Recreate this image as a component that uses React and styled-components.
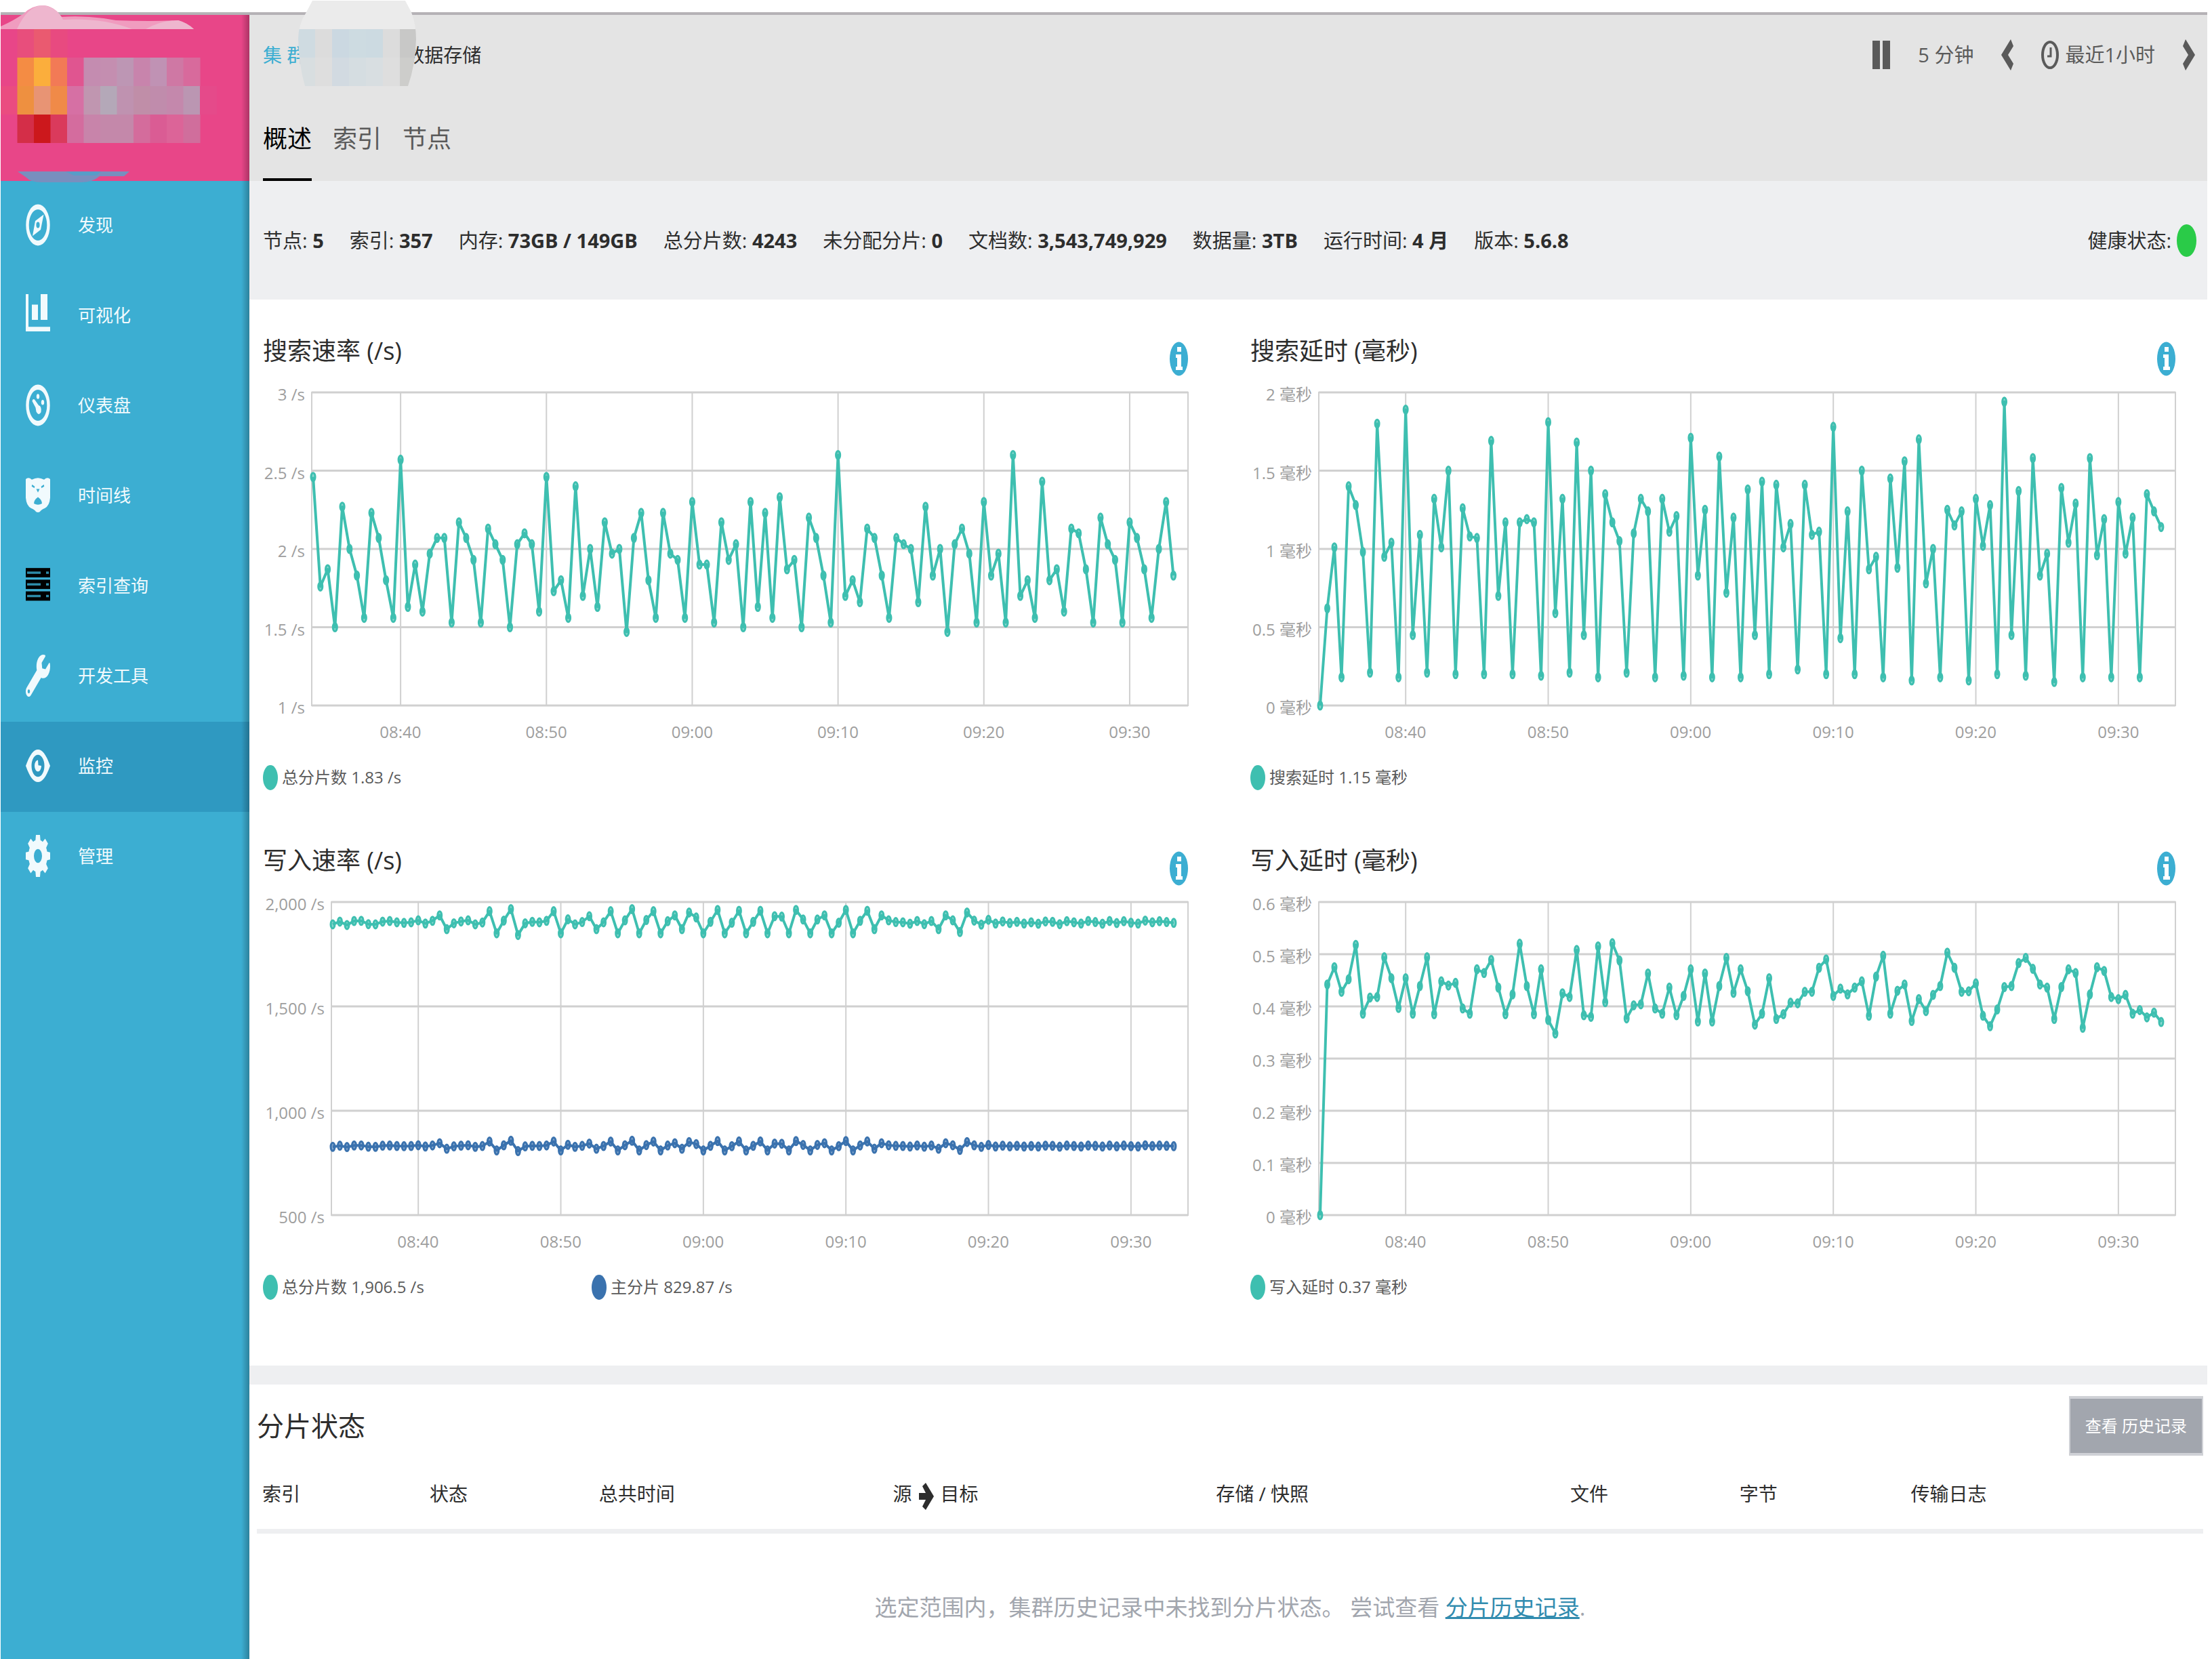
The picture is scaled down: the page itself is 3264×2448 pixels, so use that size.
import styled, { createGlobalStyle } from 'styled-components'
import { FaWrench } from 'react-icons/fa'

const GlobalStyle = createGlobalStyle`
* {
box-sizing: border-box;
}
body {
margin: 0;
background: #FFFFFF;
color: #2D2D2D;
font-family: "Open Sans", "Noto Sans CJK SC", sans-serif;
font-size: 28px;
line-height: 40px;
}
a {
color: inherit;
text-decoration: none;
}
button {
border: 0;
padding: 0;
background: none;
color: inherit;
font: inherit;
cursor: pointer;
}
svg {
display: block;
flex: none;
overflow: visible;
}
`
const Page = styled.div`
padding: 18px 7px 0 1px;
`
const Shell = styled.div`
display: flex;
min-height: calc(100vh - 18px);
border-top: 4px solid #B5B2B6;
`
const Sidebar = styled.aside`
position: relative;
flex: none;
width: 367px;
background: #3CAED2;
&::after {
content: '';
position: absolute;
top: 0;
right: 0;
bottom: 0;
width: 12px;
background: linear-gradient(to right, rgba(0, 0, 0, 0), rgba(0, 0, 0, 0.26));
}
`
const LogoBox = styled.div`
height: 245px;
background: #E84688;
`
const NavLink = styled.a`
display: flex;
align-items: center;
gap: 41px;
height: 133px;
padding: 0 0 4px 37px;
font-size: 26px;
color: #F1FAFD;
background: ${props => props.$active ? '#2F99C1' : 'none'};
svg {
width: 36px;
height: 62px;
}
`
const Main = styled.main`
flex: 1;
min-width: 0;
`
const TopBar = styled.header`
position: relative;
display: flex;
justify-content: space-between;
align-items: flex-start;
padding: 39px 18px 0 20px;
background: #E4E4E4;
`
const Crumbs = styled.div`
display: flex;
gap: 147px;
margin-bottom: 74px;
white-space: nowrap;
`
const CrumbLink = styled.a`
color: #3CAED2;
`
const CrumbMask = styled.svg`
position: absolute;
top: -22px;
left: 72px;
`
const Tabs = styled.nav`
display: flex;
gap: 31px;
`
const Tab = styled.a`
padding-bottom: 28px;
border-bottom: 4px solid ${props => props.$active ? '#000000' : 'transparent'};
font-size: 36px;
line-height: 60px;
color: ${props => props.$active ? '#000000' : '#5A5A5A'};
`
const Controls = styled.div`
display: flex;
align-items: center;
gap: 41px;
height: 40px;
font-size: 29px;
color: #5A5A5A;
`
const ControlButton = styled.button`
display: flex;
align-items: center;
gap: 9px;
`
const StatusBar = styled.section`
display: flex;
align-items: center;
gap: 38px;
height: 175px;
padding: 0 16px 0 20px;
background: #EEEFF1;
font-size: 29px;
white-space: nowrap;
`
const Health = styled.div`
display: flex;
align-items: center;
gap: 8px;
margin-left: auto;
`
const HealthDot = styled.span`
width: 29px;
height: 48px;
border-radius: 50%;
background: #2ACB48;
`
const ChartGrid = styled.section`
display: grid;
grid-template-columns: repeat(2, minmax(0, 1fr));
column-gap: 92px;
padding: 0 47px 69px 20px;
`
const Panel = styled.article`
padding: 44px 0 27px;
`
const PanelHeader = styled.div`
display: flex;
justify-content: space-between;
height: 69px;
margin-bottom: 24px;
`
const PanelTitle = styled.h2`
margin: 0;
font-size: 36px;
font-weight: 400;
line-height: 64px;
`
const InfoButton = styled.button`
align-self: flex-end;
`
const ChartBody = styled.div`
display: grid;
grid-template-columns: ${props => props.$axis}px minmax(0, 1fr);
font-size: 24px;
line-height: 32px;
color: #9E9E9E;
`
const YAxis = styled.div`
display: flex;
flex-direction: column;
justify-content: space-between;
height: 494px;
margin: -13px 0 -19px;
padding-right: 10px;
text-align: right;
white-space: nowrap;
`
const Plot = styled.svg`
width: 100%;
height: 462px;
`
// the first tick sits twelve samples in, later ones every twenty
const XAxis = styled.div`
grid-column: 2;
display: flex;
margin-top: 23px;
padding-left: 1.8%;
`
const XTick = styled.span`
flex: 0 0 calc(100% / 5.9);
text-align: center;
`
const Legend = styled.div`
display: flex;
margin-top: 31px;
font-size: 24px;
color: #5A5A5A;
`
const LegendItem = styled.div`
display: flex;
align-items: center;
gap: 6px;
width: ${props => props.$wide ? '485px' : 'auto'};
`
const LegendDot = styled.span`
width: 22px;
height: 37px;
border-radius: 50%;
background: ${props => props.color};
`
const Divider = styled.div`
height: 28px;
background: #EEEFF1;
`
const ShardSection = styled.section`
padding: 17px 6px 0 11px;
`
const ShardHeader = styled.div`
display: flex;
align-items: center;
justify-content: space-between;
`
const ShardTitle = styled.h2`
margin: 0;
font-size: 40px;
font-weight: 400;
`
const HistoryButton = styled.button`
height: 88px;
padding: 0 22px;
border: solid #CFD1D6;
border-width: 4px 2px;
background: #A2A6AE;
font-size: 24px;
color: #FFFFFF;
`
const Table = styled.table`
width: 100%;
border-collapse: collapse;
table-layout: fixed;
`
const HeadCell = styled.th`
width: ${props => props.width};
padding: 36px 8px 32px;
border-bottom: 7px solid #EEEFF1;
font-weight: 400;
text-align: left;
svg {
display: inline-block;
margin: -8px 10px;
vertical-align: middle;
}
`
const EmptyCell = styled.td`
padding: 85px 0 40px;
font-size: 33px;
line-height: 48px;
text-align: center;
color: #A2A6AE;
`
const EmptyLink = styled.a`
color: #328CAF;
text-decoration: underline;
text-decoration-thickness: 3px;
`

const TEAL = '#3EBFB0'
const BLUE = '#3A72AE'

const searchRate = [
    2.46, 1.76, 1.87, 1.5, 2.27, 2, 1.83, 1.56, 2.23, 2.07, 1.8, 1.56,
    2.57, 1.63, 1.9, 1.6, 1.97, 2.07, 2.07, 1.53, 2.17, 2.07, 1.93, 1.53, 2.13, 2.03, 1.93, 1.5, 2.03, 2.1, 2.03, 1.6,
    2.46, 1.73, 1.8, 1.56, 2.4, 1.7, 2, 1.63, 2.17, 1.97, 2, 1.47, 2.07, 2.23, 1.8, 1.56, 2.23, 1.97, 1.93, 1.56,
    2.3, 1.9, 1.9, 1.53, 2.17, 1.93, 2.03, 1.5, 2.3, 1.63, 2.23, 1.56, 2.33, 1.87, 1.93, 1.5, 2.2, 2.07, 1.83, 1.53,
    2.6, 1.7, 1.8, 1.66, 2.13, 2.07, 1.83, 1.56, 2.07, 2.03, 2, 1.66, 2.27, 1.83, 2, 1.47, 2.03, 2.13, 1.97, 1.53,
    2.3, 1.83, 1.97, 1.53, 2.6, 1.7, 1.8, 1.56, 2.43, 1.8, 1.87, 1.6, 2.13, 2.1, 1.87, 1.53, 2.2, 2.03, 1.93, 1.53,
    2.17, 2.07, 1.87, 1.56, 2, 2.3, 1.83,
]

const searchLatency = [
    0, 0.62, 1.01, 0.18, 1.4, 1.28, 0.98, 0.21, 1.8, 0.95, 1.04, 0.18,
    1.89, 0.45, 1.09, 0.21, 1.32, 1.01, 1.5, 0.2, 1.26, 1.08, 1.07, 0.2, 1.69, 0.7, 1.17, 0.2, 1.17, 1.19, 1.17, 0.19,
    1.81, 0.59, 1.32, 0.21, 1.68, 0.45, 1.5, 0.18, 1.35, 1.17, 1.05, 0.21, 1.1, 1.32, 1.24, 0.18, 1.32, 1.11, 1.21, 0.19,
    1.71, 0.83, 1.25, 0.18, 1.59, 0.72, 1.2, 0.18, 1.38, 0.45, 1.43, 0.2, 1.41, 1.01, 1.16, 0.23, 1.41, 1.09, 1.11, 0.2,
    1.78, 0.43, 1.24, 0.2, 1.5, 0.87, 0.95, 0.18, 1.45, 0.88, 1.56, 0.16, 1.7, 0.78, 1, 0.18, 1.25, 1.15, 1.24, 0.16,
    1.32, 1.02, 1.28, 0.2, 1.94, 0.45, 1.37, 0.19, 1.58, 0.83, 0.97, 0.15, 1.39, 1.04, 1.29, 0.18, 1.58, 0.96, 1.19, 0.18,
    1.3, 0.97, 1.2, 0.18, 1.35, 1.24, 1.14,
]

const indexRate = [
    1893, 1906, 1890, 1909, 1910, 1894, 1893, 1906, 1909, 1903, 1900, 1903,
    1912, 1897, 1910, 1936, 1870, 1898, 1907, 1912, 1893, 1902, 1956, 1850, 1911, 1966, 1842, 1898, 1905, 1903, 1910, 1956,
    1850, 1917, 1893, 1904, 1932, 1870, 1903, 1956, 1850, 1912, 1966, 1850, 1914, 1956, 1850, 1908, 1936, 1870, 1950, 1926,
    1850, 1905, 1962, 1850, 1901, 1958, 1850, 1905, 1958, 1850, 1932, 1930, 1850, 1962, 1916, 1850, 1916, 1936, 1850, 1901,
    1962, 1850, 1910, 1958, 1870, 1936, 1912, 1904, 1903, 1896, 1909, 1894, 1909, 1870, 1936, 1912, 1856, 1950, 1911, 1892,
    1915, 1897, 1907, 1899, 1905, 1897, 1903, 1896, 1907, 1905, 1894, 1908, 1903, 1897, 1909, 1904, 1896, 1909, 1899, 1908,
    1901, 1897, 1911, 1903, 1908, 1904, 1900,
]

// primaries take a bit under half of the total load
const primaryRate = indexRate.map(value => 832 + (value - 1905) * 0.4)

const indexLatency = [
    0, 0.442, 0.475, 0.428, 0.452, 0.518, 0.386, 0.417, 0.418, 0.494, 0.454, 0.397,
    0.454, 0.386, 0.439, 0.494, 0.385, 0.448, 0.44, 0.445, 0.396, 0.386, 0.471, 0.464, 0.489, 0.436, 0.385, 0.423, 0.52, 0.439, 0.385, 0.471,
    0.374, 0.348, 0.425, 0.418, 0.508, 0.383, 0.38, 0.515, 0.408, 0.521, 0.488, 0.377, 0.402, 0.404, 0.463, 0.396, 0.386, 0.436, 0.383, 0.42,
    0.471, 0.371, 0.463, 0.371, 0.439, 0.493, 0.426, 0.471, 0.429, 0.365, 0.386, 0.454, 0.376, 0.385, 0.407, 0.406, 0.428, 0.428, 0.474, 0.49,
    0.42, 0.434, 0.423, 0.436, 0.448, 0.382, 0.457, 0.497, 0.386, 0.43, 0.442, 0.372, 0.414, 0.391, 0.422, 0.439, 0.503, 0.474, 0.428, 0.429,
    0.444, 0.382, 0.362, 0.394, 0.437, 0.439, 0.483, 0.493, 0.472, 0.442, 0.436, 0.376, 0.437, 0.471, 0.464, 0.359, 0.423, 0.475, 0.468, 0.418,
    0.414, 0.422, 0.386, 0.393, 0.379, 0.388, 0.37,
]

const charts = [
    {
        title: '搜索速率 (/s)',
        axis: 72,
        min: 1,
        max: 3,
        labels: ['3 /s', '2.5 /s', '2 /s', '1.5 /s', '1 /s'],
        series: [{ name: '总分片数', value: '1.83 /s', color: TEAL, points: searchRate }],
    },
    {
        title: '搜索延时 (毫秒)',
        axis: 101,
        min: 0,
        max: 2,
        labels: ['2 毫秒', '1.5 毫秒', '1 毫秒', '0.5 毫秒', '0 毫秒'],
        series: [{ name: '搜索延时', value: '1.15 毫秒', color: TEAL, points: searchLatency }],
    },
    {
        title: '写入速率 (/s)',
        axis: 101,
        min: 500,
        max: 2000,
        labels: ['2,000 /s', '1,500 /s', '1,000 /s', '500 /s'],
        series: [
            { name: '总分片数', value: '1,906.5 /s', color: TEAL, points: indexRate },
            { name: '主分片', value: '829.87 /s', color: BLUE, points: primaryRate },
        ],
    },
    {
        title: '写入延时 (毫秒)',
        axis: 101,
        min: 0,
        max: 0.6,
        labels: ['0.6 毫秒', '0.5 毫秒', '0.4 毫秒', '0.3 毫秒', '0.2 毫秒', '0.1 毫秒', '0 毫秒'],
        series: [{ name: '写入延时', value: '0.37 毫秒', color: TEAL, points: indexLatency }],
    },
]

const times = ['08:40', '08:50', '09:00', '09:10', '09:20', '09:30']

const stats = [
    ['节点', '5'],
    ['索引', '357'],
    ['内存', '73GB / 149GB'],
    ['总分片数', '4243'],
    ['未分配分片', '0'],
    ['文档数', '3,543,749,929'],
    ['数据量', '3TB'],
    ['运行时间', '4 月'],
    ['版本', '5.6.8'],
]

const PLOT_WIDTH = 1280
const PLOT_HEIGHT = 462
const sampleX = index => 2 + index * 10.65

function Icon({ children }) {
    return (
        <svg viewBox="0 0 36 36" preserveAspectRatio="none" fill="currentColor" aria-hidden="true">
            {children}
        </svg>
    )
}

const DiscoverIcon = () => (
    <Icon>
        <circle cx="18" cy="18" r="15.5" fill="none" stroke="currentColor" strokeWidth="4.4" />
        <path fillRule="evenodd" d="M26.5 9L22 22L10 27.5L14 14.5ZM18 15.4A2.6 2.6 0 1 0 18 20.6A2.6 2.6 0 1 0 18 15.4Z" />
    </Icon>
)

const VisualizeIcon = () => (
    <Icon>
        <path d="M0 0H4V28H36V32H0Z" />
        <path d="M9 9H18V22H9ZM22 0H32V22H22Z" />
    </Icon>
)

const DashboardIcon = () => (
    <Icon>
        <circle cx="18" cy="18" r="15.5" fill="none" stroke="currentColor" strokeWidth="4.4" />
        <path d="M9.5 14.5Q10 12 13 13L19 18Q24 19 22.5 24Q19 27.5 15.5 23.5L14.5 20Z" />
        <circle cx="18" cy="10.5" r="2.2" />
        <circle cx="25" cy="15.5" r="2.2" />
    </Icon>
)

const TimelionIcon = () => (
    <Icon>
        <path d="M0 4Q4 2 9 4.5Q18 1.5 27 4.5Q32 2 36 4V20Q35 27 28 29Q23 30 21 32Q18 33 15 32Q13 30 8 29Q1 27 0 20Z" />
        <path d="M9 9.500L13 11M27 9.500L23 11" stroke="#3CAED2" strokeWidth="1.600" />
        <path d="M15.500 12.500H20.500L18 15.500Z" fill="#3CAED2" />
        <path d="M12 25Q12 22 18 19.500Q24 22 24 25Q18 27 12 25Z" fill="#3CAED2" />
    </Icon>
)

const QueryIcon = () => (
    <Icon>
        {[3, 13, 23].map(y => (
            <g key={y}>
                <rect x="0" y={y} width="36" height="8" fill="#000000" />
                <rect x="2" y={y + 3} width="20" height="2" fill="#2D8BA8" />
                <rect x="30" y={y + 3} width="4" height="2" fill="#2D8BA8" />
            </g>
        ))}
    </Icon>
)

const MonitorIcon = () => (
    <Icon>
        <path d="M0 18C6 8 12 4 18 4S30 8 36 18C30 28 24 32 18 32S6 28 0 18Z" />
        <circle cx="18" cy="18" r="9.5" fill="#2F99C1" />
        <path d="M18 13A5 5 0 1 0 23 18L18.5 17.5Z" />
    </Icon>
)

const GearIcon = () => (
    <Icon>
        <circle cx="18" cy="18" r="10" fill="none" stroke="currentColor" strokeWidth="8" />
        {[0, 45, 90, 135].map(angle => (
            <g key={angle} transform={`rotate(${angle} 18 18)`}>
                <path d="M15 0H21L22 7H14ZM15 36H21L22 29H14Z" />
            </g>
        ))}
    </Icon>
)

const WrenchIcon = () => <FaWrench preserveAspectRatio="none" aria-hidden="true" />

const navItems = [
    ['发现', DiscoverIcon],
    ['可视化', VisualizeIcon],
    ['仪表盘', DashboardIcon],
    ['时间线', TimelionIcon],
    ['索引查询', QueryIcon],
    ['开发工具', WrenchIcon],
    ['监控', MonitorIcon],
    ['管理', GearIcon],
]

const logoRows = [
    [null, '#E84E7C', '#EA5A70', '#E84A80'],
    [null, '#F48C44', '#FBAE3C', '#F27A56', '#E05590', '#C48CB0', '#C48EB0', '#BD96B4', '#C884AC', '#C092B4', '#CF78A4', '#D86A9C'],
    ['#EA4C80', '#EE9040', '#E89474', '#F08A48', '#D670A4', '#C096B0', '#B4A8B8', '#BF92B0', '#C08EA8', '#C08CAC', '#C488AC', '#BB96B2', '#E54A8A'],
    [null, '#D42E48', '#CC181C', '#DA3A5C', '#D46C9E', '#C884AA', '#C488AA', '#C488AA', '#D46C9C', '#DA5C94', '#DC6498', '#D06E9C'],
]

function Logo() {
    return (
        <svg width="367" height="245" aria-hidden="true">
            <path d="M0 21V17Q20 8 34 -2Q46 -14 62 -14Q78 -14 90 3Q120 1 152 5L170 8Q220 10 262 8Q276 12 285 21Z" fill="#F09CBF" />
            <path d="M24 21Q40 -14 62 -14Q82 -12 92 7Q150 4 194 21ZM214 21Q236 8 262 8Q276 12 285 21Z" fill="#EEB6CE" />
            {logoRows.map((row, y) => row.map((color, x) => color && (
                <rect key={`${x}-${y}`} x={x * 24.5} y={21 + y * 42} width="25" height="42" fill={color} />
            )))}
            <path d="M25 231H190L182 238H146Q136 247 118 247H60Q44 247 38 240Z" fill="#788FBE" />
            <path d="M96 231H148L142 237H108Z" fill="#589CC8" />
        </svg>
    )
}

function CrumbBlur() {
    const upper = ['#CFDBE1', '#DCDCDC', '#CBD8E1', '#CDDBE1', '#CCDAE1', '#DCDCDC', '#C8C8C7']
    const lower = ['#D8DEE0', '#DEDEDE', '#D2DAE1', '#D5DDE1', '#D8DEE1', '#DEDEDE', '#CDCDCB']
    return (
        <CrumbMask width="174" height="128" aria-hidden="true">
            <defs>
                <clipPath id="crumb-blur">
                    <path d="M21 1H158L167 18Q174 36 174 58Q173 96 162 127H10Q1 96 0 58Q0 36 12 18Z" />
                </clipPath>
            </defs>
            <g clipPath="url(#crumb-blur)">
                <rect width="174" height="43" fill="#EBEBEB" />
                {upper.map((color, x) => <rect key={x} x={x * 25} y="43" width="25" height="42" fill={color} />)}
                {lower.map((color, x) => <rect key={x} x={x * 25} y="85" width="25" height="42" fill={color} />)}
            </g>
        </CrumbMask>
    )
}

function Chevron({ right }) {
    return (
        <svg width="18" height="46" viewBox="0 0 18 46" aria-hidden="true">
            <path
                d={right ? 'M4 0L18 23L4 46L0 36L8 23L0 10Z' : 'M14 0L0 23L14 46L18 36L10 23L18 10Z'}
                fill="currentColor"
            />
        </svg>
    )
}

function Series({ points, color, min, max }) {
    const coords = points.map((value, index) => [
        sampleX(index),
        PLOT_HEIGHT - (value - min) / (max - min) * PLOT_HEIGHT,
    ])
    return (
        <g stroke={color}>
            <polyline points={coords.map(point => point.join(',')).join(' ')} fill="none" strokeWidth="4" strokeLinejoin="round" />
            {coords.map(([x, y]) => (
                <ellipse key={x} cx={x} cy={y} rx="3" ry="6" fill={color} fillOpacity="0.6" strokeWidth="3" />
            ))}
        </g>
    )
}

function Chart({ title, axis, min, max, labels, series }) {
    return (
        <Panel>
            <PanelHeader>
                <PanelTitle>{title}</PanelTitle>
                <InfoButton aria-label={title}>
                    <svg width="27" height="51" viewBox="0 0 27 51" aria-hidden="true">
                        <ellipse cx="13.5" cy="25.5" rx="13.5" ry="25" fill="#3CAED2" />
                        <path d="M11 8H17V15H11ZM9 19H17V37H19V42H9V37H11V24H9Z" fill="#FFFFFF" />
                    </svg>
                </InfoButton>
            </PanelHeader>
            <ChartBody $axis={axis}>
                <YAxis>
                    {labels.map(label => <span key={label}>{label}</span>)}
                </YAxis>
                <Plot viewBox={`0 0 ${PLOT_WIDTH} ${PLOT_HEIGHT}`} preserveAspectRatio="none">
                    <g stroke="#D0D0D0">
                        {labels.map((label, index) => {
                            const y = index * PLOT_HEIGHT / (labels.length - 1)
                            return <line key={label} x1="0" x2={PLOT_WIDTH} y1={y} y2={y} strokeWidth="3" />
                        })}
                        {times.map((time, index) => {
                            const x = sampleX(12 + index * 20)
                            return <line key={time} x1={x} x2={x} y1="0" y2={PLOT_HEIGHT} strokeWidth="2" />
                        })}
                        <rect width={PLOT_WIDTH} height={PLOT_HEIGHT} fill="none" strokeWidth="2" />
                    </g>
                    {series.map(item => (
                        <Series key={item.name} points={item.points} color={item.color} min={min} max={max} />
                    ))}
                </Plot>
                <XAxis>
                    {times.map(time => <XTick key={time}>{time}</XTick>)}
                </XAxis>
            </ChartBody>
            <Legend>
                {series.map(item => (
                    <LegendItem key={item.name} $wide={series.length > 1}>
                        <LegendDot color={item.color} />
                        <span>{item.name} {item.value}</span>
                    </LegendItem>
                ))}
            </Legend>
        </Panel>
    )
}

export default function App() {
    return (
        <Page>
            <GlobalStyle />
            <Shell>
                <Sidebar>
                    <LogoBox>
                        <Logo />
                    </LogoBox>
                    <nav>
                        {navItems.map(([label, NavIcon]) => (
                            <NavLink key={label} href="#" $active={label === '监控'}>
                                <NavIcon />
                                {label}
                            </NavLink>
                        ))}
                    </nav>
                </Sidebar>

                <Main>
                    <TopBar>
                        <div>
                            <Crumbs>
                                <CrumbLink href="#">集 群</CrumbLink>
                                <span>数据存储</span>
                            </Crumbs>
                            <Tabs>
                                <Tab href="#" $active>概述</Tab>
                                <Tab href="#">索引</Tab>
                                <Tab href="#">节点</Tab>
                            </Tabs>
                        </div>
                        <CrumbBlur />
                        <Controls>
                            <ControlButton aria-label="暂停">
                                <svg width="26" height="42" aria-hidden="true">
                                    <path d="M0 0H11V42H0ZM15 0H26V42H15Z" fill="currentColor" />
                                </svg>
                            </ControlButton>
                            <ControlButton>5 分钟</ControlButton>
                            <ControlButton aria-label="后退">
                                <Chevron />
                            </ControlButton>
                            <ControlButton>
                                <svg width="26" height="42" viewBox="0 0 26 42" aria-hidden="true">
                                    <ellipse cx="13" cy="21" rx="11" ry="19" fill="none" stroke="currentColor" strokeWidth="4" />
                                    <path d="M14 10V23H9" fill="none" stroke="currentColor" strokeWidth="3" />
                                </svg>
                                最近1小时
                            </ControlButton>
                            <ControlButton aria-label="前进">
                                <Chevron right />
                            </ControlButton>
                        </Controls>
                    </TopBar>

                    <StatusBar>
                        {stats.map(([label, value]) => (
                            <span key={label}>{label}: <b>{value}</b></span>
                        ))}
                        <Health>
                            健康状态:
                            <HealthDot />
                        </Health>
                    </StatusBar>

                    <ChartGrid>
                        {charts.map(chart => <Chart key={chart.title} {...chart} />)}
                    </ChartGrid>

                    <Divider />

                    <ShardSection>
                        <ShardHeader>
                            <ShardTitle>分片状态</ShardTitle>
                            <HistoryButton>查看 历史记录</HistoryButton>
                        </ShardHeader>
                        <Table>
                            <thead>
                                <tr>
                                    <HeadCell width="8.6%">索引</HeadCell>
                                    <HeadCell width="8.7%">状态</HeadCell>
                                    <HeadCell width="15.1%">总共时间</HeadCell>
                                    <HeadCell width="16.6%">
                                        源
                                        <svg width="22" height="42" viewBox="0 0 22 42" aria-hidden="true">
                                            <path d="M0 16H10L5 6L10 1L22 21L10 41L5 36L10 26H0Z" fill="currentColor" />
                                        </svg>
                                        目标
                                    </HeadCell>
                                    <HeadCell width="18.2%">存储 / 快照</HeadCell>
                                    <HeadCell width="8.7%">文件</HeadCell>
                                    <HeadCell width="8.8%">字节</HeadCell>
                                    <HeadCell>传输日志</HeadCell>
                                </tr>
                            </thead>
                            <tbody>
                                <tr>
                                    <EmptyCell colSpan={8}>
                                        选定范围内，集群历史记录中未找到分片状态。 尝试查看 <EmptyLink href="#">分片历史记录</EmptyLink>.
                                    </EmptyCell>
                                </tr>
                            </tbody>
                        </Table>
                    </ShardSection>
                </Main>
            </Shell>
        </Page>
    )
}
